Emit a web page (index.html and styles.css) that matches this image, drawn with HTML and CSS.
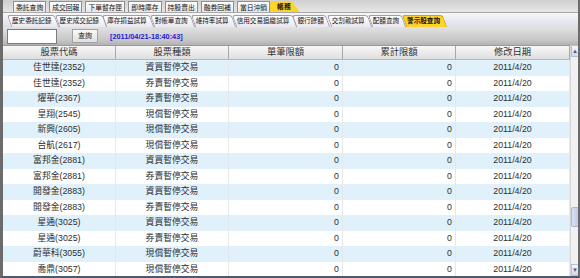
FILE: index.html
```html
<!DOCTYPE html>
<html>
  <head>
    <meta charset="utf-8">
    <link rel="stylesheet" href="styles.css">
  </head>
  <body>
    <div class="frame">
      <div class="tabs">
        <span class="tab">委託查詢</span>
        <span class="tab">成交回報</span>
        <span class="tab">下單暫存匣</span>
        <span class="tab">即時庫存</span>
        <span class="tab">持股賣出</span>
        <span class="tab">融券回補</span>
        <span class="tab">當日沖銷</span>
        <span class="tab on">帳務</span>
      </div>
      <div class="subtabs">
        <span class="sub">歷史委託記錄</span>
        <span class="sub">歷史成交記錄</span>
        <span class="sub">庫存損益試算</span>
        <span class="sub">對帳單查詢</span>
        <span class="sub">維持率試算</span>
        <span class="sub">信用交易追繳試算</span>
        <span class="sub">銀行餘額</span>
        <span class="sub">交割款試算</span>
        <span class="sub">配額查詢</span>
        <span class="sub on">警示股查詢</span>
      </div>
      <div class="toolbar">
        <input class="box" type="text">
        <button class="btn">查詢</button>
        <span class="stamp">[2011/04/21-18:40:43]</span>
      </div>
      <div class="grid">
        <div class="main">
          <div class="row head">
            <div>股票代碼</div><div>股票種類</div><div>單筆限額</div><div>累計限額</div><div>修改日期</div>
          </div>
          <div class="row"><div>佳世達(2352)</div><div>資買暫停交易</div><div class="num">0</div><div class="num">0</div><div>2011/4/20</div></div>
          <div class="row"><div>佳世達(2352)</div><div>券賣暫停交易</div><div class="num">0</div><div class="num">0</div><div>2011/4/20</div></div>
          <div class="row"><div>燿華(2367)</div><div>券賣暫停交易</div><div class="num">0</div><div class="num">0</div><div>2011/4/20</div></div>
          <div class="row"><div>皇翔(2545)</div><div>現償暫停交易</div><div class="num">0</div><div class="num">0</div><div>2011/4/20</div></div>
          <div class="row"><div>新興(2605)</div><div>現償暫停交易</div><div class="num">0</div><div class="num">0</div><div>2011/4/20</div></div>
          <div class="row"><div>台航(2617)</div><div>現償暫停交易</div><div class="num">0</div><div class="num">0</div><div>2011/4/20</div></div>
          <div class="row"><div>富邦金(2881)</div><div>資買暫停交易</div><div class="num">0</div><div class="num">0</div><div>2011/4/20</div></div>
          <div class="row"><div>富邦金(2881)</div><div>券賣暫停交易</div><div class="num">0</div><div class="num">0</div><div>2011/4/20</div></div>
          <div class="row"><div>開發金(2883)</div><div>資買暫停交易</div><div class="num">0</div><div class="num">0</div><div>2011/4/20</div></div>
          <div class="row"><div>開發金(2883)</div><div>券賣暫停交易</div><div class="num">0</div><div class="num">0</div><div>2011/4/20</div></div>
          <div class="row"><div>星通(3025)</div><div>資買暫停交易</div><div class="num">0</div><div class="num">0</div><div>2011/4/20</div></div>
          <div class="row"><div>星通(3025)</div><div>券賣暫停交易</div><div class="num">0</div><div class="num">0</div><div>2011/4/20</div></div>
          <div class="row"><div>蔚華科(3055)</div><div>現償暫停交易</div><div class="num">0</div><div class="num">0</div><div>2011/4/20</div></div>
          <div class="row"><div>喬鼎(3057)</div><div>現償暫停交易</div><div class="num">0</div><div class="num">0</div><div>2011/4/20</div></div>
          <div class="row"><div></div><div></div><div></div><div></div><div></div></div>
        </div>
        <div class="scroll">
          <div class="arrow">&#9650;</div>
          <div class="track"><div class="thumb"></div></div>
          <div class="arrow">&#9660;</div>
        </div>
      </div>
    </div>
  </body>
</html>
```

FILE: styles.css
```css
body{
    margin:0;
    width:580px;
    height:278px;
    overflow:hidden;
    font-family:"Liberation Sans","Noto Sans CJK TC",sans-serif;
    background:#5a5a5a;
}
.frame{
    height:278px;
    display:flex;
    flex-direction:column;
    background:#e9e9e9;
    border-left:3px solid #6b6b6b;
    border-right:2px solid #6b6b6b;
    border-bottom:2px solid #4c5a70;
    box-sizing:border-box;
}
.tabs{
    display:flex;
    align-items:flex-end;
    height:12px;
    padding-left:10px;
    gap:3px;
    background:linear-gradient(#cfcfcf,#e6e6e6);
}
.tab{
    height:11px;
    padding:0 2px;
    font-size:6.8px;
    line-height:11px;
    color:#111;
    border:1px solid #8e8e8e;
    border-bottom:none;
    box-sizing:border-box;
    background:linear-gradient(#ffffff,#e8e8e8);
}
.tab.on{
    margin-left:-3px;
    padding:0 9px 0 7px;
    border:none;
    font-weight:bold;
    background:#ffd42a;
    clip-path:polygon(0 0,72% 0,100% 100%,0 100%);
}
.subtabs{
    display:flex;
    align-items:flex-end;
    height:14px;
    padding-left:5px;
    background:linear-gradient(#f6f6fa,#dedee8);
    border-top:1px solid #a8a8a8;
}
.sub{
    position:relative;
    height:12px;
    padding:0 4px;
    font-size:6.6px;
    line-height:12px;
    color:#111;
    z-index:1;
}
.sub::before{
    content:"";
    position:absolute;
    top:0;
    bottom:0;
    left:1px;
    right:-1px;
    border:1px solid #9d9da8;
    border-bottom:none;
    border-radius:3px 3px 0 0;
    transform:skewX(20deg);
    background:linear-gradient(#ffffff,#e8e8ef);
    z-index:-1;
}
.sub.on{
    font-weight:bold;
}
.sub.on::before{
    background:#ffd42a;
    border-color:#c8a800;
}
.toolbar{
    display:flex;
    align-items:center;
    height:18px;
    padding-left:4px;
    background:linear-gradient(#e2e2e2,#c8c8c8 70%,#b2b2b2);
}
.box{
    width:50px;
    height:15px;
    margin:0;
    padding:0;
    border:1px solid #7c7c7c;
    box-sizing:border-box;
    background:#fff;
}
.btn{
    width:26px;
    height:14px;
    margin:0 0 0 15px;
    padding:0;
    font-family:inherit;
    font-size:7px;
    line-height:12px;
    color:#222;
    border:1px solid #a2a2a2;
    background:linear-gradient(#fafafa,#dedede);
}
.stamp{
    margin-left:12px;
    font-size:7.3px;
    font-weight:bold;
    color:#1a1adc;
}
.grid{
    flex:1;
    display:flex;
    min-height:0;
    background:#fff;
    overflow:hidden;
}
.main{
    width:567px;
}
.row{
    display:grid;
    grid-template-columns:113px 113px 114px 113px 114px;
    height:15.5px;
    font-size:8.8px;
    line-height:15.5px;
    color:#2e2e2e;
    text-align:center;
}
.row:nth-child(even){
    background:#e0f1fb;
}
.row div{
    border-right:1px solid #e7e7e7;
    white-space:nowrap;
    overflow:hidden;
}
.row .num{
    text-align:right;
    padding-right:3px;
}
.row.head{
    height:13px;
    line-height:12px;
    font-size:9.3px;
    color:#333;
    background:linear-gradient(#f8f8f8,#dedede);
    border-top:1px solid #9a9a9a;
    border-bottom:1px solid #b8b8b8;
}
.row.head div{
    border-right:1px solid #a8a8a8;
}
.scroll{
    width:9px;
    display:flex;
    flex-direction:column;
    background:#f1f1f3;
    border-left:1px solid #d6d6d6;
}
.arrow{
    height:10px;
    font-size:6px;
    line-height:10px;
    text-align:center;
    color:#4a5f8a;
    background:linear-gradient(#f4f7fc,#cfd9ea);
    border:1px solid #b4c0d4;
}
.track{
    flex:1;
    position:relative;
}
.thumb{
    position:absolute;
    top:150px;
    left:0;
    right:0;
    height:18px;
    background:linear-gradient(90deg,#d9e3f3,#bccbe6);
    border:1px solid #a8b8d4;
    border-radius:2px;
}
```
